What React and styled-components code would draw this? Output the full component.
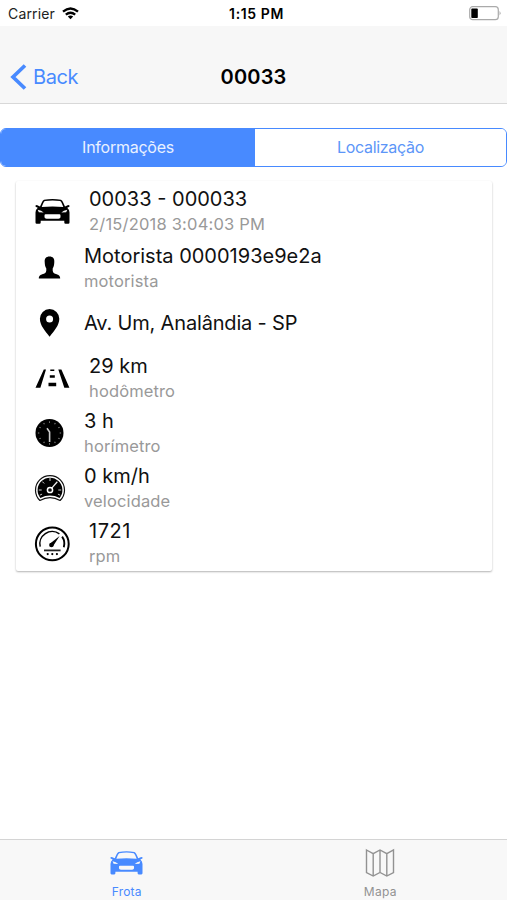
import React from 'react';
import styled, { createGlobalStyle } from 'styled-components';

const GlobalStyle = createGlobalStyle`
    * {
        box-sizing: border-box;
    }
    body {
        margin: 0;
        background: #fff;
        font-family: Inter, "Liberation Sans", sans-serif;
    }
`;

const Screen = styled.div`
    width: 507px;
    height: 900px;
    display: flex;
    flex-direction: column;
    overflow: hidden;
`;

const StatusBar = styled.div`
    height: 26px;
    display: grid;
    grid-template-columns: 1fr auto 1fr;
    align-items: center;
    padding: 1px 6px 0 8px;
    flex: none;
`;

const Carrier = styled.div`
    display: flex;
    align-items: center;
    gap: 7px;
    font-size: 14px;
    letter-spacing: 0.15px;
    color: #222;
`;

const Clock = styled.div`
    padding-left: 4px;
    font-size: 14px;
    font-weight: 600;
    letter-spacing: 0.6px;
`;

const BatteryIcon = styled.svg`
    justify-self: end;
    display: block;
`;

const NavBar = styled.div`
    height: 78px;
    flex: none;
    display: grid;
    grid-template-columns: 1fr auto 1fr;
    align-items: center;
    padding: 24px 10px 0;
    background: #f7f7f7;
    border-bottom: 1px solid #d8d8d8;
`;

const BackButton = styled.div`
    display: flex;
    align-items: center;
    gap: 6px;
    font-size: 20px;
    letter-spacing: -0.45px;
    color: #488aff;
`;

const NavTitle = styled.div`
    font-size: 20px;
    font-weight: 600;
    letter-spacing: 0.2px;
`;

const Content = styled.div`
    flex: 1;
    padding-top: 24px;
`;

const Segment = styled.div`
    height: 39px;
    display: flex;
    border: 1.5px solid #488aff;
    border-radius: 6px;
    overflow: hidden;
`;

const SegmentButton = styled.div`
    flex: ${props => props.$active ? '0 0 254px' : '1'};
    display: flex;
    align-items: center;
    justify-content: center;
    padding-bottom: 1px;
    font-size: 16px;
    letter-spacing: ${props => props.$spacing};
    color: ${props => props.$active ? '#e9f1ff' : '#5c96f8'};
    background: ${props => props.$active ? '#488aff' : '#fff'};
`;

const Card = styled.div`
    margin: 14px 15px 0 16px;
    border-radius: 2px;
    box-shadow: 0 1px 2px rgba(0, 0, 0, 0.3);
`;

const Item = styled.div`
    height: ${props => props.$first ? '60px' : '55px'};
    display: flex;
    align-items: center;
    gap: 19px;
    padding-left: 19px;
`;

const ItemIcon = styled.svg`
    width: ${props => props.$wide ? '35px' : '30px'};
    height: 36px;
    flex: none;
    display: block;
    margin-bottom: 2px;
    overflow: visible;
`;

const ItemTitle = styled.div`
    font-size: 20px;
    line-height: 27px;
    letter-spacing: ${props => props.$spacing || '0'};
    color: #111;
    white-space: nowrap;
`;

const ItemNote = styled.div`
    font-size: 16.5px;
    line-height: 22px;
    padding-bottom: 2px;
    letter-spacing: ${props => props.$spacing || '0.13px'};
    color: #999;
    white-space: nowrap;
`;

const TabBar = styled.div`
    height: 61px;
    flex: none;
    display: flex;
    background: #f8f8f8;
    border-top: 1px solid #d4d4d4;
`;

const Tab = styled.div`
    flex: 1;
    display: flex;
    flex-direction: column;
    align-items: center;
    padding-top: 7px;
    font-size: 12px;
    line-height: 16px;
    letter-spacing: ${props => props.$active ? '0.2px' : '0.3px'};
    color: ${props => props.$active ? '#488aff' : '#929292'};

    svg {
        display: block;
        margin-bottom: 5px;
    }
`;

// shared by the list row and the tab, drawn on a 35x26 box
const carShape = (
    <React.Fragment>
        <path
            fill="currentColor"
            fillRule="evenodd"
            d="M9 1.3Q17.5-.5 26 1.3Q27.3 1.8 28.3 4.2L30 8L33.2 6.5Q35.2 6.6 34.4 8.2L32.2 9.2Q34.4 11 34.5 14V24Q34.5 25.2 33.3 25.2H30.5Q29.3 25.2 29.3 24V22.2H5.7V24Q5.7 25.2 4.5 25.2H1.7Q.5 25.2 .5 24V14Q.6 11 2.8 9.2L.6 8.2Q-.2 6.6 1.8 6.5L5 8L6.7 4.2Q7.7 1.8 9 1.3ZM9.8 2.6Q8.8 3.2 8 5.2L6.7 8.4Q17.5 7.4 28.3 8.4L27 5.2Q26.2 3.2 25.2 2.6Q17.5 1.2 9.8 2.6ZM10.5 15.8Q9.5 15.8 9.5 17V18.7Q9.7 20.1 11.5 20.3H23.5Q25.3 20.1 25.5 18.7V17Q25.5 15.8 24.5 15.8Z"
        />
        <path d="M2.7 11.2Q6.5 11.8 8.7 14.1L3.8 13.8ZM32.3 11.2Q28.5 11.8 26.3 14.1L31.2 13.8Z" fill="#f8f8f8" />
    </React.Fragment>
);

const CarIcon = () => (
    <ItemIcon $wide viewBox="0 0 35 36">
        <g transform="translate(0 6.5)">{carShape}</g>
    </ItemIcon>
);

const PersonIcon = () => (
    <ItemIcon viewBox="0 0 30 36">
        <path d="M14.5 6.6C18 6.6 19.6 8.8 19.3 12C19.2 15.2 18.6 17 17.7 18.5C17.5 21.8 18 23 20 23.7C23.2 24.7 25 25.2 25.2 28.4H3.8C4 25.2 5.8 24.7 9 23.7C11 23 11.5 21.8 11.3 18.5C10.4 17 9.8 15.2 9.7 12C9.4 8.8 11 6.6 14.5 6.6Z" />
    </ItemIcon>
);

const PinIcon = () => (
    <ItemIcon viewBox="0 0 30 36">
        <path fillRule="evenodd" d="M14.6 4A9.7 9.7 0 0 0 4.9 13.8C4.9 20.6 10.2 26 14.6 31.7C19 26 24.3 20.6 24.3 13.8A9.7 9.7 0 0 0 14.6 4ZM14.6 10.4A3.5 3.5 0 1 1 14.6 17.4A3.5 3.5 0 1 1 14.6 10.4Z" />
    </ItemIcon>
);

const RoadIcon = () => (
    <ItemIcon $wide viewBox="0 0 35 36">
        <path d="M8.8 9.4H11L5.4 27.8H.5ZM23.3 9.4H26.4L34.4 27.8H29.3ZM15.3 9.6H19.3V11H15.3ZM14.8 15.3H19.8V17.7H14.8ZM13.5 22.8H21.2V26.2H13.5Z" />
    </ItemIcon>
);

const minuteMarks = [0, 30, 60, 90, 120, 150, 180, 210, 240, 270, 300, 330];

const HourIcon = () => (
    <ItemIcon viewBox="0 0 30 36">
        <circle cx="14.5" cy="18" r="14" />
        {minuteMarks.map(deg => (
            <path key={deg} d="M14.5 6.4V7.8" stroke="#888" strokeWidth="1" transform={`rotate(${deg} 14.5 18)`} />
        ))}
        <path d="M14.6 27V17L12 13.3" fill="none" stroke="#ccc" strokeWidth="1.6" />
    </ItemIcon>
);

const SpeedIcon = () => (
    <ItemIcon viewBox="0 0 30 36">
        <path
            d="M4.9 30.5A14.5 14.5 0 1 1 25.1 30.5Q15 24.8 4.9 30.5Z"
            fill="#fff"
            stroke="#111"
            strokeWidth="1.2"
            strokeLinejoin="round"
        />
        <path d="M5.4 27.9A12.4 12.4 0 1 1 24.6 27.9Q15 23 5.4 27.9Z" />
        <path d="M15 8V11M7.3 11.6L9.2 13.5M3.8 20H6.7M26.2 20H23.3M4.8 25.2L7.1 24.1M25.2 25.2L22.9 24.1" stroke="#ccc" strokeWidth="1" />
        <path d="M16.5 18.4L22.3 11.7" stroke="#eee" strokeWidth="1.3" />
        <circle cx="15" cy="20" r="2.6" fill="#111" stroke="#fff" strokeWidth="1.5" />
    </ItemIcon>
);

const RpmIcon = () => (
    <ItemIcon $wide viewBox="0 0 35 36">
        <g transform="translate(0 1.2)">
            <circle cx="17.3" cy="17.7" r="16.4" fill="none" stroke="#000" strokeWidth="2" />
            <path d="M5.2 20.5A12.3 12.3 0 0 1 24.4 7.7" fill="none" stroke="#000" strokeWidth="1.5" />
            <path d="M27.1 10.4A12.3 12.3 0 0 1 28.8 21" fill="none" stroke="#000" strokeWidth="1.9" />
            <path d="M14.8 17.5L24.6 9.7L18 20Z" />
            <circle cx="16.4" cy="18.8" r="2.3" />
            <path d="M9 24.2H25.6" stroke="#222" strokeWidth="1.8" />
            <circle cx="12.7" cy="27.9" r="1.1" />
            <circle cx="17.3" cy="27.9" r="1.1" />
            <circle cx="21.9" cy="27.9" r="1.1" />
        </g>
    </ItemIcon>
);

const rows = [
    { icon: CarIcon, title: '00033 - 000033', note: '2/15/2018 3:04:03 PM', noteSpacing: '0.2px' },
    { icon: PersonIcon, title: 'Motorista 0000193e9e2a', note: 'motorista' },
    { icon: PinIcon, title: 'Av. Um, Analândia - SP', spacing: '-0.17px' },
    { icon: RoadIcon, title: '29 km', note: 'hodômetro' },
    { icon: HourIcon, title: '3 h', note: 'horímetro' },
    { icon: SpeedIcon, title: '0 km/h', note: 'velocidade' },
    { icon: RpmIcon, title: '1721', note: 'rpm', spacing: '0.5px' },
];

class App extends React.Component {
    render() {
        return <Screen>
            <GlobalStyle />
            <StatusBar>
                <Carrier>
                    Carrier
                    <svg width="17" height="13" viewBox="0 0 17 13">
                        <g fill="none" stroke="#000" strokeWidth="2.3">
                            <path d="M1 4.7Q8.5-1.8 16 4.7" />
                            <path d="M3.8 7.7Q8.5 3.8 13.2 7.7" />
                        </g>
                        <path d="M5.8 9.6Q8.5 7.5 11.2 9.6L8.5 12.3Z" />
                    </svg>
                </Carrier>
                <Clock>1:15 PM</Clock>
                <BatteryIcon width="32" height="15" viewBox="0 0 32 15">
                    <rect x=".7" y=".7" width="28.6" height="13" rx="3" fill="#fff" stroke="#aaa" strokeWidth="1.2" />
                    <rect x="2.3" y="2.6" width="6.5" height="9.4" rx=".8" />
                    <path d="M30.6 5Q32.4 7.2 30.6 9.4Z" fill="#999" />
                </BatteryIcon>
            </StatusBar>
            <NavBar>
                <BackButton>
                    <svg width="17" height="26" viewBox="0 0 17 26">
                        <path d="M15 1.5L3 13L15 24.5" fill="none" stroke="#488aff" strokeWidth="3.7" />
                    </svg>
                    Back
                </BackButton>
                <NavTitle>00033</NavTitle>
            </NavBar>
            <Content>
                <Segment>
                    <SegmentButton $active $spacing="-0.25px">Informações</SegmentButton>
                    <SegmentButton $spacing="-0.3px">Localização</SegmentButton>
                </Segment>
                <Card>
                    {rows.map((row, i) => {
                        const Icon = row.icon;
                        return <Item key={row.title} $first={i === 0}>
                            <Icon />
                            <div>
                                <ItemTitle $spacing={row.spacing}>{row.title}</ItemTitle>
                                {row.note && <ItemNote $spacing={row.noteSpacing}>{row.note}</ItemNote>}
                            </div>
                        </Item>;
                    })}
                </Card>
            </Content>
            <TabBar>
                <Tab $active>
                    <svg width="33" height="32" viewBox="0 0 35 34">
                        <g transform="translate(0 4)">{carShape}</g>
                    </svg>
                    Frota
                </Tab>
                <Tab>
                    <svg width="30" height="32" viewBox="0 0 30 32">
                        <path
                            d="M1.5 3L8.2 6.7L15 3L21.8 6.7L28.5 3V25.5L21.8 29L15 25.5L8.2 29L1.5 25.5ZM8.2 6.7V29M15 3V25.5M21.8 6.7V29"
                            fill="none"
                            stroke="#929292"
                            strokeWidth="1.4"
                        />
                    </svg>
                    Mapa
                </Tab>
            </TabBar>
        </Screen>
    }
}

export default App;
